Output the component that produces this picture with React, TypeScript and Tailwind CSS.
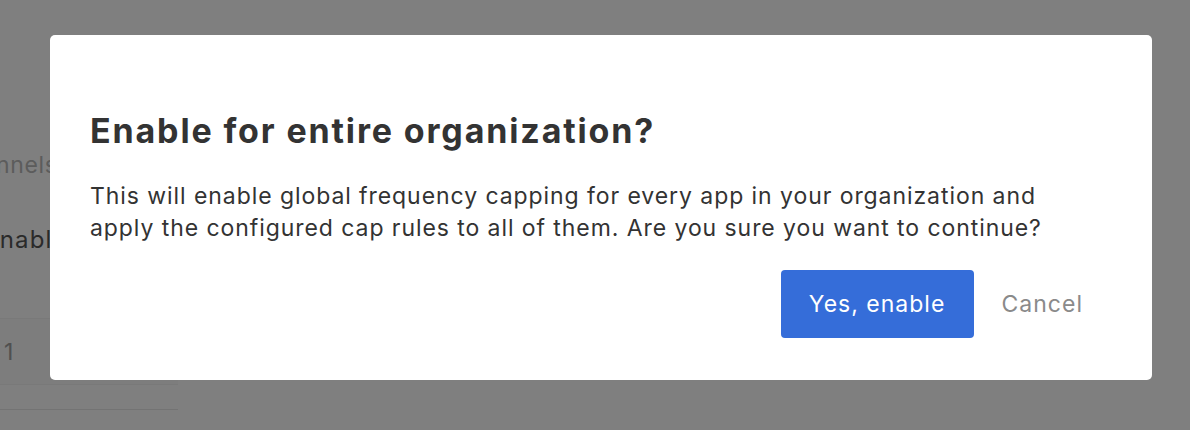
export default function App() {
  const font = { fontFamily: 'Inter, "Noto Sans", sans-serif' }
  return (
    <div className="relative h-[430px] w-[1190px] overflow-hidden bg-white" style={font}>
      {/* page behind the dialog */}
      <div className="w-[178px] pt-[151px] text-[23px] leading-[28px] tracking-[0.6px]">
        <div className="-ml-[49px] text-[#b8b8b8]">Channels</div>
        <div className="mt-[47px] -ml-[16px] text-[24px] tracking-[1.2px] text-[#555]">Enable</div>
        <div className="mt-[64px] flex h-[67px] items-center border-y border-[#f3f3f3] bg-[#fafafa] pl-[4px] text-[#a0a0a0]">
          1
        </div>
        <div className="mt-[24px] border-b border-[#e6e6e6]" />
      </div>

      <div className="absolute inset-0 bg-black/50 pt-[35px] pl-[50px]">
        <div className="h-[345px] w-[1102px] rounded-[5px] bg-white pl-[40px] pr-[69px] pt-[76px]">
          <h2 className="text-[34px] font-bold leading-[40px] tracking-[1.85px] text-[#333]">
            Enable for entire organization?
          </h2>
          <p className="mt-[29px] whitespace-nowrap text-[23px] leading-[32px] tracking-[0.93px] text-[#333]">
            This will enable global frequency capping for every app in your organization and
            <br />
            apply the configured cap rules to all of them. Are you sure you want to continue?
          </p>
          <div className="mt-[26px] flex items-center justify-end gap-[28px]">
            <button className="h-[68px] w-[193px] rounded-[4px] bg-[#356dd9] text-[23px] tracking-[1px] text-white">
              Yes, enable
            </button>
            <button className="text-[23px] tracking-[1px] text-[#8a8a8a]">Cancel</button>
          </div>
        </div>
      </div>
    </div>
  )
}
